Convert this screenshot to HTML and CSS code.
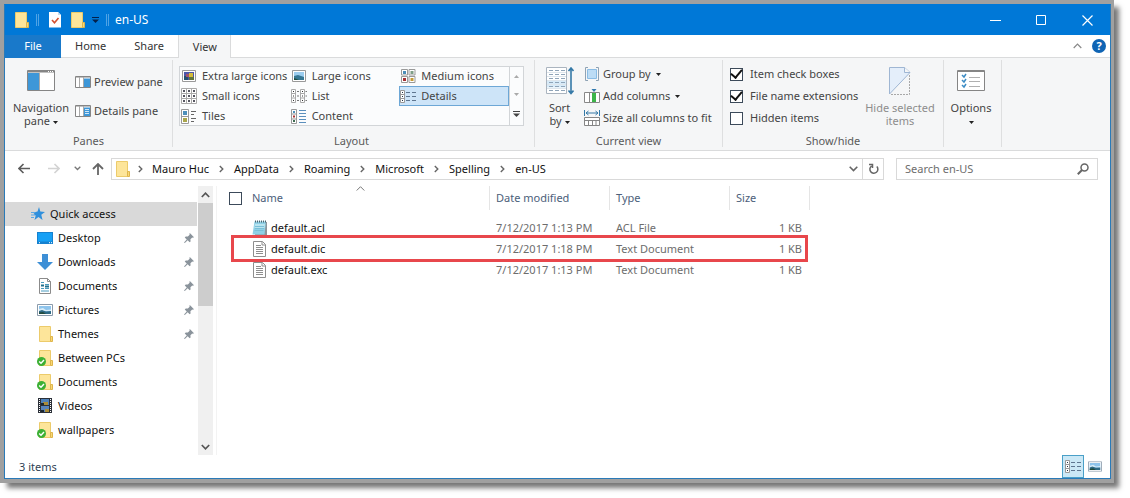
FILE: index.html
```html
<!DOCTYPE html>
<html lang="en">
<head>
<meta charset="utf-8">
<title>en-US</title>
<link rel="stylesheet" href="styles.css">
</head>
<body>
<svg class="defs" aria-hidden="true">
  <symbol id="folder" viewBox="0 0 14 16"><path d="M.5.5h11v15H.5z" fill="#fde59a" stroke="#eccb6b"/><path d="M11.500 10.500h2v5h-2z" fill="#f9d875" stroke="#deb54c"/></symbol>
  <symbol id="synced" viewBox="0 0 16 16"><use href="#folder" x="2" width="14" height="16"/><circle cx="4.500" cy="11.500" r="4.500" fill="#3cb034"/><path d="M2.200 11.500l1.800 1.800 3-3.300" fill="none" stroke="#fff" stroke-width="1.400"/></symbol>
  <symbol id="doc" viewBox="0 0 13 16"><path d="M.5.5h9l3 3v12H.5z" fill="#fff" stroke="#8e8e8e"/><path d="M9 .5v3.500h3.500M3 4.500h5M3 6.500h7M3 8.500h7M3 10.500h7M3 12.500h7" fill="none" stroke="#8e8e8e"/></symbol>
  <symbol id="pin" viewBox="0 0 12 12"><path d="M7 0l5 5-1.300.7-.8-.3-2.200 2.200.2 2.600L6.800 11.200 4.400 8.800 1 12 0 11.500l3.300-3.800L.9 5.300l1.200-1.200 2.500.2 2.200-2.200-.3-.8z" fill="#8a939b"/></symbol>
  <symbol id="picture" viewBox="0 0 16 12"><path d="M.5.5h15v11H.5z" fill="#fff" stroke="#8b9bab"/><path d="M2 2h12v8H2z" fill="#8ec4ec"/><path d="M2 5l4-1 3 2 5-.5V7H2z" fill="#d7ecf8"/><path d="M2 7l3-1 4 1.500 5-.5v3H2z" fill="#2f6b86"/><path d="M2 8.500l4-.5 3 2H2z" fill="#234b3d"/></symbol>
  <symbol id="details" viewBox="0 0 16 13"><path d="M.5.5h4v12h-4zM.5 4.500h4M.5 8.500h4" fill="#fff" stroke="#999"/><path d="M2 2h1v1H2zM2 6h1v1H2zM2 10h1v1H2z" fill="#234"/><path d="M6 2.500h4M12 2.500h4M6 6.500h4M12 6.500h4M6 10.500h4M12 10.500h4" stroke="#5f7690"/></symbol>
  <symbol id="crumb" viewBox="0 0 5 8"><path d="M.8 1l3 3-3 3" fill="none" stroke="#666" stroke-width="1.400"/></symbol>
  <symbol id="caret" viewBox="0 0 5 3"><path d="M0 0h5L2.500 3z" fill="currentColor"/></symbol>
</svg>

<div class="frame">
<main class="window">
  <header class="titlebar">
    <svg class="i14" viewBox="0 0 14 16"><use href="#folder"/></svg>
    <span class="divider"></span>
    <button class="plain prop" aria-label="Properties"><svg width="12" height="16" viewBox="0 0 12 16"><path d="M0 0h9l3 3v12.500H0z" fill="#fff"/><path d="M9 0v3h3" fill="#c9dcec"/><path d="M3 8l2.500 2.800L9.500 6" fill="none" stroke="#d4502f" stroke-width="1.600"/></svg></button>
    <button class="plain newf" aria-label="New folder"><svg class="i14" viewBox="0 0 14 16"><use href="#folder"/></svg></button>
    <button class="plain more" aria-label="Customize toolbar"><svg width="7" height="7" viewBox="0 0 7 7"><path d="M0 .5h7" stroke="#04204a"/><path d="M0 2.500h7L3.500 6z" fill="#04204a"/></svg></button>
    <span class="divider"></span>
    <h1 class="title">en-US</h1>
    <div class="controls">
      <button class="plain" aria-label="Minimize"><svg width="11" height="11"><path d="M0 5.500h11" stroke="#fff"/></svg></button>
      <button class="plain" aria-label="Maximize"><svg width="11" height="11"><path d="M.5.5h9v9h-9z" fill="none" stroke="#fff"/></svg></button>
      <button class="plain" aria-label="Close"><svg width="11" height="11"><path d="M.5.5l10 10M10.500.5l-10 10" stroke="#fff" stroke-width="1.200"/></svg></button>
    </div>
  </header>

  <nav class="tabs">
    <button class="tab file">File</button>
    <button class="tab">Home</button>
    <button class="tab">Share</button>
    <button class="tab active">View</button>
    <div class="help">
      <button class="plain" aria-label="Collapse ribbon"><svg width="9" height="6"><path d="M.7 5L4.500 1.200 8.300 5" fill="none" stroke="#888" stroke-width="1.200"/></svg></button>
      <button class="plain round" aria-label="Help">?</button>
    </div>
  </nav>

  <section class="ribbon">
    <div class="group panes">
      <div class="tools">
        <button class="big nav-pane"><span class="pic"><svg width="28" height="21"><path d="M.5.5h27v20H.5z" fill="#fff" stroke="#858585"/><path d="M1 1.500h26" stroke="#858585" stroke-width="2"/><path d="M1 3h11v17H1z" fill="#3e97d8"/><path d="M12.500 3v17" stroke="#aaa"/><path d="M21 1.500h1M23 1.500h1M25 1.500h1" stroke="#fff"/></svg></span><span>Navigation</span><span>pane <svg class="caret"><use href="#caret"/></svg></span></button>
        <div class="stack wide">
          <button class="small"><svg width="16" height="12"><path d="M.5.5h15v11H.5z" fill="#fff" stroke="#858585"/><path d="M1 1h14" stroke="#858585"/><path d="M4.500 1v10M8.500 1v10" stroke="#aaa"/><path d="M9 2.500h6V11H9z" fill="#3e97d8"/></svg>Preview pane</button>
          <button class="small"><svg width="16" height="12"><path d="M.5.5h15v11H.5z" fill="#fff" stroke="#858585"/><path d="M1 1h14" stroke="#858585"/><path d="M4.500 1v10M8.500 1v10" stroke="#aaa"/><path d="M9 2.500h6V11H9z" fill="#3e97d8"/><path d="M10 4.500h4M10 6.500h4M10 8.500h4" stroke="#cfe6f8"/></svg>Details pane</button>
        </div>
      </div>
      <h2>Panes</h2>
    </div>

    <div class="group layout">
      <div class="gallery">
        <div class="options">
          <button><svg width="16" height="12"><path d="M1.500.5h13v11h-13z" fill="#fff" stroke="#999"/><path d="M3 2h10v8H3z" fill="#4d55a8"/><path d="M3 6h4v4H3z" fill="#244f6e"/><path d="M8 3h4v4H8z" fill="#d4bc39"/><path d="M8 7h5v3H8z" fill="#60743b"/><path d="M5 4h3v3H5z" fill="#a45269"/></svg>Extra large icons</button>
          <button><svg width="16" height="12"><path d="M1.500.5h13v11h-13z" fill="#fff" stroke="#999"/><path d="M3 2h10v8H3z" fill="#9ccdef"/><path d="M3 6l4-1 6 2v3H3z" fill="#367793"/><path d="M3 8l5 2H3z" fill="#204d3e"/></svg>Large icons</button>
          <button><svg width="16" height="14"><path d="M1.500.5h6v5.500h-6zM9 .5h6v5.500H9zM1.500 7.500h6v6h-6zM9 7.500h6v6H9z" fill="#fff" stroke="#999"/><path d="M3 2h3v3H3z" fill="#4a8db9"/><path d="M10.500 2h3v3h-3z" fill="#7f9e87"/><path d="M3 9h3v3H3z" fill="#a52f33"/><path d="M10.500 9h3v3h-3z" fill="#c59a36"/></svg>Medium icons</button>
          <button><svg width="16" height="16"><path d="M.5.5h15v15H.5zM.5 5.500h15M.5 10.500h15M5.500.5v15M10.500.5v15" fill="#fff" stroke="#aaa"/><path d="M2 3h2M7 3h2M12 3h2M2 8h2M7 8h2M12 8h2M2 13h2M7 13h2M12 13h2" stroke="#555560" stroke-width="2"/></svg>Small icons</button>
          <button><svg width="16" height="14"><path d="M.5.5h4v13h-4zM.5 4.500h4M.5 9h4M9.500.5h4v13h-4zM9.500 4.500h4M9.500 9h4" fill="#fff" stroke="#aaa"/><path d="M2 2.500h1M2 7h1M2 11.500h1M11 2.500h1M11 7h1M11 11.500h1" stroke="#333"/><path d="M6 2.500h2M6 7h2M6 11.500h2M14.500 2.500H16M14.500 7H16M14.500 11.500H16" stroke="#777"/></svg>List</button>
          <button class="chosen"><svg width="16" height="13"><use href="#details"/></svg>Details</button>
          <button><svg width="16" height="15"><path d="M.5.5h7v14h-7zM.5 7.500h7" fill="#fff" stroke="#999"/><path d="M2 2h4v4H2z" fill="#4d8fba"/><path d="M2 9h4v4H2z" fill="#aaa64b"/><path d="M10 2.500h5M10 5.500h3M10 9.500h5M10 12.500h3" stroke="#666"/></svg>Tiles</button>
          <button><svg width="16" height="15"><path d="M.5.5h5v14h-5zM.5 5h5M.5 10h5" fill="#fff" stroke="#999"/><path d="M2 2h2v2H2z" fill="#4d8fba"/><path d="M2 6.500h2v2H2z" fill="#a33"/><path d="M2 11h2v2H2z" fill="#3b6b50"/><path d="M8 1.500h7M8 4.500h7M8 7.500h7M8 10.500h7M8 13.500h7" stroke="#5b8fbd"/></svg>Content</button>
        </div>
        <div class="scroller">
          <button class="plain" aria-label="Scroll up"><svg width="5" height="3"><path d="M0 3h5L2.500 0z" fill="#aaa"/></svg></button>
          <button class="plain" aria-label="Scroll down"><svg width="5" height="3"><path d="M0 0h5L2.500 3z" fill="#aaa"/></svg></button>
          <button class="plain" aria-label="More layouts"><svg width="7" height="6"><path d="M0 .5h7" stroke="#444"/><path d="M0 2.500h7L3.500 6z" fill="#444"/></svg></button>
        </div>
      </div>
      <h2>Layout</h2>
    </div>

    <div class="group current">
      <div class="tools">
        <button class="big sort"><span class="pic top"><svg width="28" height="28"><path d="M.5.5h20v26H.5z" fill="#fff" stroke="#aab4bf"/><path d="M1 13.500h19v7H1z" fill="#d7ebf9"/><path d="M3 3.500h16M3 7.500h16M3 11.500h16M3 15.500h16M3 19.500h16M3 23.500h16" stroke="#8fa4b8" stroke-dasharray="4 2"/><path d="M1 5.500h19M1 9.500h19M1 13.500h19M1 17.500h19M1 21.500h19" stroke="#dfe6ec"/><path d="M25 2v23M22.500 4L25 1l2.500 3M22.500 23.500L25 26.500l2.500-3" fill="none" stroke="#3579a7" stroke-width="1.600"/></svg></span><span>Sort</span><span>by <svg class="caret"><use href="#caret"/></svg></span></button>
        <div class="stack">
          <button class="small"><svg width="16" height="14"><path d="M4 .5H1.500v13H4M12 .5h2.500v13H12" fill="none" stroke="#8fa3b5"/><path d="M3.500 2.500h9v9h-9z" fill="#bcdcf5" stroke="#8abce4"/></svg>Group by <svg class="caret"><use href="#caret"/></svg></button>
          <button class="small"><svg width="16" height="14"><path d="M.5 3.500h15v10H.5zM5.500 3.500v10M10.500 3.500v10" fill="#fff" stroke="#888"/><path d="M8 4h4v9H8z" fill="#3db54a"/><path d="M7.500 0h5L10 3z" fill="#2f78ae"/></svg>Add columns <svg class="caret"><use href="#caret"/></svg></button>
          <button class="small"><svg width="16" height="16"><path d="M.5 0v6M15.500 0v6M2 3h12M4.500 1L2 3l2.500 2M11.500 1L14 3l-2.500 2" fill="none" stroke="#3579a7"/><path d="M.5 7.500h15v8H.5zM.5 10.500h15M4.500 10.500v5M8.500 10.500v5M12 10.500v5" fill="#fff" stroke="#858585"/></svg>Size all columns to fit</button>
        </div>
      </div>
      <h2>Current view</h2>
    </div>

    <div class="group show">
      <div class="tools">
        <div class="stack checks">
          <label class="small"><input type="checkbox" checked>Item check boxes</label>
          <label class="small"><input type="checkbox" checked>File name extensions</label>
          <label class="small"><input type="checkbox">Hidden items</label>
        </div>
        <button class="big hide" disabled><span class="pic top"><svg width="22" height="28"><path d="M.5.5h15l5.500 5L.5 27z" fill="#e4eefa" stroke="#9fb6d3"/><path d="M15.500.5v5H21" fill="#f5f6f7" stroke="#9fb6d3"/><path d="M20.500 8v19.500H1" fill="none" stroke="#a8a8a8" stroke-dasharray="2 1"/></svg></span><span>Hide selected</span><span>items</span></button>
      </div>
      <h2>Show/hide</h2>
    </div>

    <div class="group opts">
      <button class="big"><span class="pic"><svg width="28" height="21"><path d="M.5.5h27v20H.5z" fill="#fff" stroke="#858585"/><path d="M1 1.500h26" stroke="#858585"/><path d="M12 7.500h11M12 11.500h11M12 16.500h11" stroke="#b0b0b0"/><path d="M5 5l2 2 2-3M5 10l2 2 2-3M5 15l2 2 2-3" fill="none" stroke="#3d8cc4" stroke-width="1.500"/></svg></span><span>Options</span><span><svg class="caret"><use href="#caret"/></svg></span></button>
    </div>
  </section>

  <div class="location">
    <button class="plain" aria-label="Back"><svg width="12" height="11"><path d="M12 5.500H1M5.500 1L1 5.500 5.500 10" fill="none" stroke="#5c5c5c" stroke-width="1.600"/></svg></button>
    <button class="plain" aria-label="Forward"><svg width="12" height="11"><path d="M0 5.500h11M6.500 1L11 5.500 6.500 10" fill="none" stroke="#d3d3d3" stroke-width="1.600"/></svg></button>
    <button class="plain recent" aria-label="Recent locations"><svg width="7" height="5"><path d="M.7.7l2.800 2.800L6.300.7" fill="none" stroke="#777" stroke-width="1.300"/></svg></button>
    <button class="plain up" aria-label="Up"><svg width="12" height="12"><path d="M6 12V1M1 6l5-5 5 5" fill="none" stroke="#666" stroke-width="1.800"/></svg></button>
    <div class="address">
      <svg class="i14" viewBox="0 0 14 16"><use href="#folder"/></svg>
      <svg class="crumb"><use href="#crumb"/></svg><a href="#">Mauro Huc</a>
      <svg class="crumb"><use href="#crumb"/></svg><a href="#">AppData</a>
      <svg class="crumb"><use href="#crumb"/></svg><a href="#">Roaming</a>
      <svg class="crumb"><use href="#crumb"/></svg><a href="#">Microsoft</a>
      <svg class="crumb"><use href="#crumb"/></svg><a href="#">Spelling</a>
      <svg class="crumb"><use href="#crumb"/></svg><a href="#">en-US</a>
      <button class="plain drop" aria-label="Previous locations"><svg width="9" height="6"><path d="M.7.7l3.800 3.800L8.300.7" fill="none" stroke="#666" stroke-width="1.600"/></svg></button>
      <button class="plain refresh" aria-label="Refresh"><svg width="11" height="12"><path d="M8.800 3.500A4 4 0 1 1 3.500 3M1 1.500h3.500V5" fill="none" stroke="#666" stroke-width="1.500"/></svg></button>
    </div>
    <label class="search"><input type="text" placeholder="Search en-US" aria-label="Search en-US"><svg width="12" height="12"><circle cx="7.500" cy="4.500" r="3.500" fill="none" stroke="#666" stroke-width="1.500"/><path d="M5 7L.8 11.200" stroke="#666" stroke-width="2"/></svg></label>
  </div>

  <div class="body">
    <aside class="sidebar">
      <ul class="tree">
        <li class="root"><svg width="14" height="14" viewBox="0 0 14 14"><path d="M8 0l1.300 4.500L14 5l-3.700 2.800L11.500 13 7.500 10 3.500 13 4.700 8.500 2.500 7l2-2 2-.5z" fill="#2f8fdc"/><path d="M0 5.500h4M0 8h4M0 10.500h3" stroke="#5aa9e6"/></svg><a href="#">Quick access</a></li>
        <li><svg width="16" height="12"><path d="M0 0h16v12H0z" fill="#1681cf"/><path d="M1 1h14v8.500H1z" fill="#16a0f5"/><path d="M2 10.700h1M12 10.700h1M14 10.700h1" stroke="#fff"/></svg><a href="#">Desktop</a><svg class="pin"><use href="#pin"/></svg></li>
        <li><svg width="16" height="16"><path d="M5 0h6v8h5l-8 8-8-8h5z" fill="#3d8fd6"/></svg><a href="#">Downloads</a><svg class="pin"><use href="#pin"/></svg></li>
        <li><svg width="16" height="16"><path d="M2.500.5h8l3 3v12h-11z" fill="#fff" stroke="#8b8b8b"/><path d="M10.500.5v3h3" fill="none" stroke="#8b8b8b"/><path d="M4 4.500h3M8 6.500h4M4 10.500h3M8 10.500h4M4 13h8" stroke="#4a9cc0"/><path d="M4 7.500h3M8 8.500h4" stroke="#21718f" stroke-width="2"/></svg><a href="#">Documents</a><svg class="pin"><use href="#pin"/></svg></li>
        <li><svg width="16" height="12"><use href="#picture"/></svg><a href="#">Pictures</a><svg class="pin"><use href="#pin"/></svg></li>
        <li><svg width="16" height="16"><use href="#folder" x="2" width="14" height="16"/></svg><a href="#">Themes</a><svg class="pin"><use href="#pin"/></svg></li>
        <li><svg width="16" height="16"><use href="#synced"/></svg><a href="#">Between PCs</a></li>
        <li><svg width="16" height="16"><use href="#synced"/></svg><a href="#">Documents</a></li>
        <li><svg width="16" height="16"><path d="M1 0h14v15H1z" fill="#2b3038"/><path d="M4 1h8v6H4z" fill="#4d80b8"/><path d="M4 8h8v6H4z" fill="#5884ba"/><path d="M6 4h5v3H6zM8 11h4v3H8z" fill="#aa8b36"/><path d="M4 5h3v2H4zM4 12h3v2H4z" fill="#1a2734"/><path d="M2.500 1v14M13.500 1v14" stroke="#fff" stroke-dasharray="1 1"/></svg><a href="#">Videos</a></li>
        <li><svg width="16" height="16"><use href="#synced"/></svg><a href="#">wallpapers</a></li>
      </ul>
      <div class="scrollbar">
        <button class="plain" aria-label="Scroll up"><svg width="9" height="6"><path d="M.8 5L4.500 1.200 8.200 5" fill="none" stroke="#555" stroke-width="1.700"/></svg></button>
        <div class="track"><div class="thumb"></div></div>
        <button class="plain" aria-label="Scroll down"><svg width="9" height="6"><path d="M.8 1l3.700 3.800L8.200 1" fill="none" stroke="#555" stroke-width="1.700"/></svg></button>
      </div>
    </aside>
    <div class="files">
      <table>
        <thead><tr>
          <th class="c-name"><div><input type="checkbox" aria-label="Select all">Name<svg class="sorted" width="9" height="5"><path d="M.7 4.500L4.500.7l3.800 3.800" fill="none" stroke="#777"/></svg></div></th>
          <th class="c-date"><div>Date modified</div></th>
          <th class="c-type"><div>Type</div></th>
          <th class="c-size"><div>Size</div></th>
        </tr></thead>
        <tbody>
          <tr><td class="name"><svg width="15" height="16"><path d="M3 2h12v13H3z" fill="#8c969c"/><path d="M2.500 1.500h11.500L12.500 14.500H.5z" fill="#8fd0e6"/><path d="M3 4h10l-.5 4H2.500z" fill="#b9e4f0"/><path d="M3 1.500h11" stroke="#4a6672" stroke-width="2" stroke-dasharray="1 1"/><path d="M3 6.500h9M3 8.500h9M2.500 10.500h9" stroke="#79c0d8"/></svg>default.acl</td><td>7/12/2017 1:13 PM</td><td>ACL File</td><td class="size">1 KB</td></tr>
          <tr class="marked"><td class="name"><svg width="15" height="16"><use href="#doc"/></svg>default.dic</td><td>7/12/2017 1:18 PM</td><td>Text Document</td><td class="size">1 KB</td></tr>
          <tr><td class="name"><svg width="15" height="16"><use href="#doc"/></svg>default.exc</td><td>7/12/2017 1:13 PM</td><td>Text Document</td><td class="size">1 KB</td></tr>
        </tbody>
      </table>
    </div>
  </div>

  <footer class="status">
    <span>3 items</span>
    <div class="views">
      <button class="plain on" aria-label="Details view"><svg width="16" height="13"><use href="#details"/></svg></button>
      <button class="plain" aria-label="Large icons view"><svg width="14" height="11" viewBox="0 0 16 12"><use href="#picture"/></svg></button>
    </div>
  </footer>
</main>
</div>
</body>
</html>
```
FILE: styles.css
```css
* { box-sizing: border-box; }
body {
  margin: 0;
  min-height: 100vh;
  padding: 0 16px 15px 0;
  display: flex;
  background: #fff;
  font: 11px/16px "Noto Sans", "Open Sans", sans-serif;
  color: #111;
}
.defs { position: absolute; width: 0; height: 0; }
svg { flex: none; display: block; }
button, input { font: inherit; color: inherit; margin: 0; }
button { border: 0; padding: 0; background: none; white-space: nowrap; }
a { color: inherit; text-decoration: none; }
h1, h2 { margin: 0; font-size: inherit; font-weight: 400; }
.plain { display: flex; align-items: center; justify-content: center; }
.i14 { width: 14px; height: 16px; }
.caret { display: inline-block; width: 5px; height: 3px; vertical-align: middle; color: #222; }

.frame {
  flex: 1;
  display: flex;
  min-width: 0;
  border: 4px solid #a0a0a0;
  border-right-width: 3px;
  box-shadow: 6px 6px 5px -1px #777;
}
.window {
  flex: 1;
  min-width: 0;
  display: flex;
  flex-direction: column;
  border: 1px solid #2a7ab8;
  border-top-color: #0078d7;
  background: #fff;
}

.titlebar { display: flex; align-items: center; height: 30px; padding-left: 10px; background: #0078d7; color: #fff; }
.divider { width: 3px; height: 12px; margin-left: 7px; border: solid #4fa3e6; border-width: 0 1px; }
.prop { margin-left: 10px; }
.newf { margin-left: 10px; }
.more { margin-left: 7px; }
.more + .divider { margin-left: 7px; }
.title { margin-left: 6px; font-size: 12px; }
.controls { display: flex; margin-left: auto; }
.controls button { width: 46px; height: 30px; }

.tabs { display: flex; height: 23px; }
.tab { padding: 0 14px; border-bottom: 1px solid #dadbdc; color: #333; }
.tab.file { width: 56px; background: #1979ca; border-color: #1979ca; color: #fff; }
.tab.active { width: 53px; border: 1px solid #dadbdc; border-width: 0 1px; background: #f5f6f7; }
.help { flex: 1; display: flex; align-items: center; justify-content: flex-end; gap: 10px; padding-right: 4px; border-bottom: 1px solid #dadbdc; }
.round { width: 14px; height: 14px; border-radius: 50%; background: #0f64b4; color: #fff; font-weight: 700; }

.ribbon { display: flex; height: 93px; padding: 2px 0 3px; background: #f5f6f7; border-bottom: 1px solid #dadbdc; color: #444; }
.group { flex: none; display: flex; flex-direction: column; justify-content: space-between; border-right: 1px solid #dedfe0; }
.group h2 { text-align: center; color: #5a5a5a; line-height: 12px; }
.panes { width: 168px; }
.layout { width: 362px; padding: 6px 10px 0 6px; }
.current { width: 188px; }
.show { width: 221px; }
.opts { width: 58px; padding-right: 3px; }
.tools { display: flex; }
.big { display: flex; flex-direction: column; align-items: center; padding-top: 7px; line-height: 13px; }
.big:disabled { color: #8d8d8d; }
.pic { height: 34px; padding-top: 3px; }
.pic.top { padding-top: 0; }
.nav-pane { width: 72px; }
.sort { width: 49px; }
.hide { width: 88px; margin-right: -1px; }
.small { display: flex; align-items: center; gap: 3px; height: 22px; white-space: nowrap; }
.small .caret { margin-left: 2px; }
.stack { padding-top: 3px; }
.stack.wide { display: flex; flex-direction: column; gap: 7px; padding-top: 11px; margin-left: -2px; }
.checks { flex: 1; min-width: 0; padding-left: 7px; }
.checks .small { gap: 7px; }
input[type="checkbox"] { appearance: none; flex: none; width: 13px; height: 13px; border: 1px solid #3c4a5a; background: #fff; }
input[type="checkbox"]:checked { display: grid; place-items: center; }
input[type="checkbox"]:checked::before { content: ""; width: 5px; height: 9px; margin-top: -3px; border: solid #111; border-width: 0 2px 2px 0; rotate: 40deg; }

.gallery { display: flex; height: 60px; border: 1px solid #d2d5d8; background: #fbfcfd; }
.options { flex: 1; display: grid; grid-template-columns: repeat(3, 1fr); grid-auto-rows: 20px; margin-top: -1px; }
.options button { display: flex; align-items: center; gap: 5px; border: 1px solid transparent; }
.options .chosen { background: #cde4f8; border-color: #6da7d6; }
.scroller { display: grid; width: 14px; border-left: 1px solid #d2d5d8; }

.location { display: flex; align-items: center; height: 35px; padding: 0 12px 0 13px; }
.location > .plain + .plain { margin-left: 18px; }
.location .recent.recent { margin-left: 14px; }
.location .up.up { margin-left: 11px; }
.address { flex: 1; display: flex; align-items: center; height: 22px; margin-left: 7px; padding-left: 4px; border: 1px solid #d9d9d9; }
.crumb { width: 5px; height: 8px; margin: 0 10px; }
.i14 + .crumb { margin: 0 9px 0 8px; }
.drop { width: 18px; height: 20px; margin-left: auto; }
.refresh { width: 21px; height: 20px; border-left: 1px solid #d9d9d9; }
.search { display: flex; align-items: center; width: 202px; height: 22px; margin-left: 12px; padding: 0 8px; border: 1px solid #d9d9d9; }
.search input { flex: 1; min-width: 0; padding: 0; border: 0; outline: 0; background: none; }
.search input::placeholder { color: #6d6d6d; opacity: 1; }

.body { flex: 1; display: flex; min-height: 269px; }
.sidebar { display: flex; width: 212px; border-right: 1px solid #f3f3f3; }
.tree { flex: 1; margin: 0; padding: 16px 0 0; list-style: none; }
.tree li { display: flex; align-items: center; gap: 5px; height: 24px; padding: 0 4px 0 32px; }
.tree .root { padding-left: 26px; margin-right: 1px; background: #d9d9d9; }
.pin { width: 10px; height: 10px; margin-left: auto; }
.scrollbar { display: flex; flex-direction: column; width: 15px; margin-right: 3px; background: #f0f0f0; }
.scrollbar button { height: 17px; }
.track { flex: 1; }
.thumb { height: 44%; background: #cdcdcd; }
.files { flex: 1; padding-left: 5px; }
table { border-collapse: collapse; table-layout: fixed; width: 588px; }
th, td { padding: 0; text-align: left; font-weight: 400; white-space: nowrap; }
th { color: #4c607a; padding-bottom: 7px; }
th div { position: relative; display: flex; align-items: center; height: 24px; padding-left: 6px; border-right: 1px solid #e5e5e5; }
.c-name { width: 268px; }
.c-name div { padding-left: 7px; gap: 10px; }
.c-date, .c-type { width: 120px; }
.c-size { width: 80px; }
.sorted { position: absolute; top: 0; left: 50%; }
td { height: 21px; padding-left: 6px; color: #6d6d6d; }
td.name { display: flex; align-items: center; gap: 4px; padding-left: 30px; color: #111; }
td.size { padding: 0 8px 0 0; text-align: right; }
.marked { position: relative; }
.marked::after { content: ""; position: absolute; inset: -3px 2px -3px 9px; border: 3px solid #e8474c; }

.status { display: flex; align-items: center; justify-content: space-between; height: 23px; padding: 0 4px 0 14px; color: #2f3f55; }
.views { display: flex; }
.views button { width: 22px; height: 23px; }
.views .on { border: 1px solid #4aa0c8; background: #cbe8f6; }
```
